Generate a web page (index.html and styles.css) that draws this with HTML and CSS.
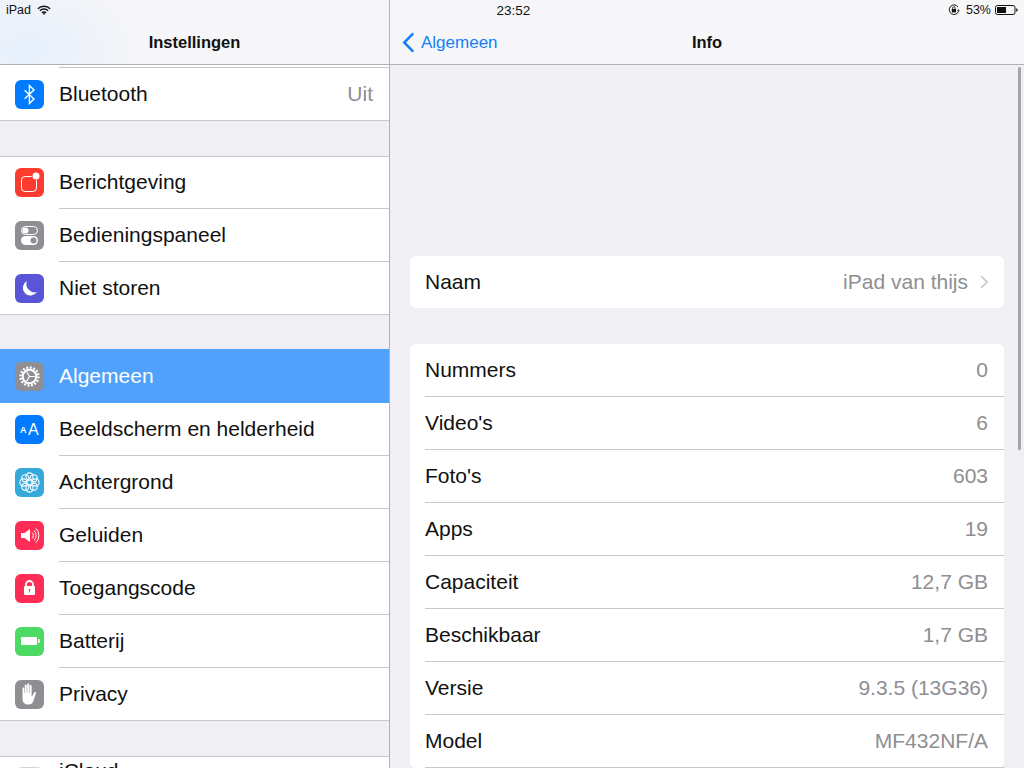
FILE: index.html
```html
<!DOCTYPE html>
<html lang="nl">
<head>
<meta charset="utf-8">
<title>Instellingen</title>
<link rel="stylesheet" href="styles.css">
</head>
<body>
<div class="screen">
  <div class="status">
    <div class="status-left">
      <span>iPad</span>
      <svg class="wifi" viewBox="0 0 14 10"><path d="M.9 3.700a8.700 8.700 0 0 1 12.200 0M2.900 5.800a5.800 5.800 0 0 1 8.200 0M4.900 7.800a2.900 2.900 0 0 1 4.200 0" fill="none" stroke="#111" stroke-width="1.500"/><path d="M7 10 5.700 8.600a1.900 1.900 0 0 1 2.600 0z" fill="#111"/></svg>
    </div>
    <div class="status-time">23:52</div>
    <div class="status-right">
      <svg class="lock-rot" viewBox="0 0 12 12"><path d="M10.600 7.200A4.800 4.800 0 1 1 10 3" fill="none" stroke="#111" stroke-width="1"/><path d="M10.400 5.200 12 6.800H9z" fill="#111"/><rect x="3.800" y="5" width="4.200" height="3.400" fill="#111"/><path d="M4.600 5V4a1.300 1.300 0 0 1 2.600 0v1" fill="none" stroke="#111" stroke-width=".8"/></svg>
      <span class="pct">53%</span>
      <svg class="batt" viewBox="0 0 23 10"><rect x=".5" y=".5" width="19.500" height="9" rx="2" fill="none" stroke="#111"/><rect x="2" y="2" width="9" height="6" fill="#111"/><path d="M21.200 3.200c1 .2 1.500 1 1.500 1.800s-.5 1.600-1.500 1.800z" fill="#111"/></svg>
    </div>
  </div>

  <aside class="sidebar">
    <header class="nav nav-left"><h1 class="nav-title">Instellingen</h1></header>
    <div class="list">
      <div class="group group-first">
        <div class="row">
          <svg class="icon" viewBox="0 0 29 29"><rect width="29" height="29" rx="6" fill="#007aff"/><path d="M9.600 10.200 19 18.900l-4.600 4.600V5.500L19 10.100 9.600 18.800" fill="none" stroke="#fff" stroke-width="1.400"/></svg>
          <span class="label">Bluetooth</span><span class="value">Uit</span>
        </div>
      </div>
      <div class="group">
        <div class="row">
          <svg class="icon" viewBox="0 0 29 29"><rect width="29" height="29" rx="6" fill="#ff3b30"/><rect x="6.500" y="8.500" width="15" height="15" rx="3.500" fill="none" stroke="#fff"/><circle cx="21" cy="8" r="4.500" fill="#ff3b30"/><circle cx="21" cy="8" r="3.500" fill="#fff"/></svg>
          <span class="label">Berichtgeving</span>
        </div>
        <div class="row">
          <svg class="icon" viewBox="0 0 29 29"><rect width="29" height="29" rx="6" fill="#8e8e93"/><rect x="6.500" y="5.500" width="16" height="8" rx="4" fill="none" stroke="#fff"/><circle cx="10.500" cy="9.500" r="3" fill="#fff"/><rect x="6" y="15" width="17" height="9" rx="4.500" fill="#fff"/><circle cx="18.500" cy="19.500" r="3" fill="#8e8e93"/></svg>
          <span class="label">Bedieningspaneel</span>
        </div>
        <div class="row">
          <svg class="icon" viewBox="0 0 29 29"><rect width="29" height="29" rx="6" fill="#5856d6"/><path d="M12 7A7.700 7.700 0 1 0 22 18 8.300 8.300 0 0 1 12 7z" fill="#fff"/></svg>
          <span class="label">Niet storen</span>
        </div>
      </div>
      <div class="group group-active">
        <div class="row row-active">
          <svg class="icon" viewBox="0 0 29 29"><rect width="29" height="29" rx="6" fill="#8e8e93"/><circle cx="14.500" cy="14.500" r="9" fill="none" stroke="#fff" stroke-width="2.400" stroke-dasharray="1.900 1.634"/><circle cx="14.500" cy="14.500" r="6.800" fill="none" stroke="#fff" stroke-width="2"/><path d="M20 14.500H14.500L11.700 9.700M14.500 14.500 11.700 19.300" fill="none" stroke="#fff" stroke-width="1.200"/></svg>
          <span class="label">Algemeen</span>
        </div>
        <div class="row">
          <svg class="icon" viewBox="0 0 29 29"><rect width="29" height="29" rx="6" fill="#007aff"/><text x="5" y="18" class="aa-small">A</text><text x="13" y="20" class="aa-big">A</text></svg>
          <span class="label">Beeldscherm en helderheid</span>
        </div>
        <div class="row">
          <svg class="icon" viewBox="0 0 29 29"><rect width="29" height="29" rx="6" fill="#34aadc"/><g fill="none" stroke="#fff" stroke-width="1.100"><circle cx="14.500" cy="8.500" r="3.600"/><circle cx="14.500" cy="20.500" r="3.600"/><circle cx="8.500" cy="14.500" r="3.600"/><circle cx="20.500" cy="14.500" r="3.600"/><circle cx="10.300" cy="10.300" r="3.600"/><circle cx="18.700" cy="10.300" r="3.600"/><circle cx="10.300" cy="18.700" r="3.600"/><circle cx="18.700" cy="18.700" r="3.600"/></g></svg>
          <span class="label">Achtergrond</span>
        </div>
        <div class="row">
          <svg class="icon" viewBox="0 0 29 29"><rect width="29" height="29" rx="6" fill="#ff2d55"/><path d="M6 12h3.500L15 8v13l-5.500-4H6z" fill="#fff"/><path d="M17 11.500a4 4 0 0 1 0 6M19 9.500a7 7 0 0 1 0 10M21 7.500a10 10 0 0 1 0 14" fill="none" stroke="#fff" stroke-width="1"/></svg>
          <span class="label">Geluiden</span>
        </div>
        <div class="row">
          <svg class="icon" viewBox="0 0 29 29"><rect width="29" height="29" rx="6" fill="#ff2d55"/><path d="M11 12V10.500a3.500 3.500 0 0 1 7 0V12" fill="none" stroke="#fff" stroke-width="1.800"/><rect x="9" y="12" width="11" height="9" rx="1" fill="#fff"/><path d="M14.500 15.500v3" stroke="#ff2d55" stroke-width=".8"/><circle cx="14.500" cy="15.800" r=".9" fill="#ff2d55"/></svg>
          <span class="label">Toegangscode</span>
        </div>
        <div class="row">
          <svg class="icon" viewBox="0 0 29 29"><rect width="29" height="29" rx="6" fill="#4cd964"/><rect x="6" y="10" width="16" height="8" rx="1" fill="#fff"/><rect x="23" y="12.200" width="1.600" height="3.600" fill="#fff"/></svg>
          <span class="label">Batterij</span>
        </div>
        <div class="row">
          <svg class="icon" viewBox="0 0 29 29"><rect width="29" height="29" rx="6" fill="#8e8e93"/><path d="M7.500 8.500c0-1.300 1.800-1.300 1.800 0V13h.5V5.500c0-1.300 1.900-1.300 1.900 0V13h.5V4.500c0-1.300 2-1.300 2 0V13h.5V6c0-1.300 1.900-1.300 1.900 0v10l.5.200 2-3.500c.8-1.200 2.400-.4 1.800.9L18 22c-1 1.800-2.500 2.500-4.500 2.500-3.700 0-6-2-6-6z" fill="#fff"/></svg>
          <span class="label">Privacy</span>
        </div>
      </div>
      <div class="group">
        <div class="row row-double">
          <svg class="icon" viewBox="0 0 29 29"><rect x=".5" y=".5" width="28" height="28" rx="6" fill="#fff" stroke="#d4d4d6"/><path d="M7 19a3.500 3.500 0 0 1 1-6.800 5.500 5.500 0 0 1 10.500-1.200A4 4 0 0 1 22 19z" fill="#54c7fc"/></svg>
          <span class="label label-top">iCloud</span>
        </div>
      </div>
    </div>
  </aside>

  <main class="detail">
    <header class="nav nav-right">
      <a class="back">
        <svg class="chev-back" viewBox="0 0 13 22"><path d="M11.500 1.500 2 11l9.500 9.500" fill="none" stroke="#157efb" stroke-width="2.600"/></svg>
        <span>Algemeen</span>
      </a>
      <h2 class="nav-title">Info</h2>
    </header>
    <div class="content">
      <section class="card card-name">
        <div class="irow">
          <span class="label">Naam</span>
          <span class="value">iPad van thijs</span>
          <svg class="chev" viewBox="0 0 9 14"><path d="M1 1l6 6-6 6" fill="none" stroke="#c7c7cc" stroke-width="1.700"/></svg>
        </div>
      </section>
      <section class="card">
        <div class="irow"><span class="label">Nummers</span><span class="value">0</span></div>
        <div class="irow"><span class="label">Video's</span><span class="value">6</span></div>
        <div class="irow"><span class="label">Foto's</span><span class="value">603</span></div>
        <div class="irow"><span class="label">Apps</span><span class="value">19</span></div>
        <div class="irow"><span class="label">Capaciteit</span><span class="value">12,7 GB</span></div>
        <div class="irow"><span class="label">Beschikbaar</span><span class="value">1,7 GB</span></div>
        <div class="irow"><span class="label">Versie</span><span class="value">9.3.5 (13G36)</span></div>
        <div class="irow"><span class="label">Model</span><span class="value">MF432NF/A</span></div>
      </section>
    </div>
    <div class="scrollbar"></div>
  </main>
</div>
</body>
</html>
```
FILE: styles.css
```css
* { box-sizing: border-box; }
html, body { margin: 0; padding: 0; }
body {
  width: 1024px;
  height: 768px;
  overflow: hidden;
  background: #efeff4;
  font-family: "Liberation Sans", Arial, sans-serif;
  color: #111;
}
.screen {
  position: relative;
  display: flex;
  width: 1024px;
  height: 768px;
  overflow: hidden;
}

/* status bar */
.status {
  position: absolute;
  top: 0;
  left: 0;
  z-index: 3;
  width: 1024px;
  height: 20px;
  display: grid;
  grid-template-columns: 1fr auto 1fr;
  align-items: center;
  padding: 0 6px;
  font-size: 12.500px;
  color: #111;
}
.status-left { display: flex; align-items: center; gap: 6px; }
.status-time { font-size: 13.500px; padding: 1px 0 0 3px; }
.status-right { display: flex; align-items: center; justify-content: flex-end; }
.wifi { width: 14px; height: 10px; }
.lock-rot { width: 12px; height: 12px; margin-right: 6px; }
.pct { margin-right: 4px; }
.batt { width: 23px; height: 10px; }

/* nav */
.nav {
  height: 65px;
  border-bottom: 1px solid #b2b2b2;
  display: flex;
  align-items: center;
  justify-content: center;
  padding-top: 20px;
  flex: none;
}
.nav-left {
  background: radial-gradient(ellipse 120px 80px at 25px 50px, #e5effc 0%, #eef3fa 50%, #f6f6f8 100%);
}
.nav-right { position: relative; background: #f6f6f8; }
.nav-title { margin: 0; font-size: 16.500px; font-weight: 700; line-height: 24px; color: #111; }
.back {
  position: absolute;
  left: 12px;
  top: 32px;
  display: flex;
  align-items: center;
  gap: 6px;
  color: #157efb;
  font-size: 17px;
  line-height: 20px;
}
.chev-back { width: 13px; height: 21px; }

/* sidebar */
.sidebar {
  width: 390px;
  flex: none;
  display: flex;
  flex-direction: column;
  border-right: 1px solid #b2b2b2;
  background: #efeff4;
}
.list { flex: 1; min-height: 0; overflow: hidden; }
.group {
  background: #fff;
  box-shadow: inset 0 1px 0 #c8c7cc;
  margin-bottom: 35px;
}
.group-first { padding-top: 2px; box-shadow: none; }
.group-first::before {
  content: "";
  display: block;
  height: 1px;
  margin-left: 59px;
  background: #c8c7cc;
}
.group-active { margin-top: -1px; }
.row {
  position: relative;
  display: flex;
  align-items: center;
  height: 53px;
  padding: 0 16px 1px 15px;
  font-size: 21px;
}
.row::after {
  content: "";
  position: absolute;
  left: 59px;
  right: 0;
  bottom: 0;
  height: 1px;
  background: #c8c7cc;
}
.row:last-child::after { left: 0; }
.row-active {
  height: 54px;
  padding-bottom: 0;
  background: #4fa1fb;
  color: #fff;
}
.row-active::after { display: none; }
.icon { width: 29px; height: 29px; flex: none; margin-right: 15px; }
.row-double .icon { margin-top: -1px; }
.aa-small { font: 700 9px "Liberation Sans", sans-serif; fill: #fff; }
.aa-big { font: 400 16px "Liberation Sans", sans-serif; fill: #fff; }
.label { flex: 1; white-space: nowrap; }
.label-top { align-self: flex-start; margin-top: 3px; line-height: 24px; }
.value { color: #8e8e93; white-space: nowrap; }

/* detail */
.detail {
  position: relative;
  flex: 1;
  min-width: 0;
  display: flex;
  flex-direction: column;
}
.content { padding: 191px 20px 0; flex: 1; min-height: 0; overflow: hidden; }
.card {
  background: #fff;
  border-radius: 6px;
}
.card-name { margin-bottom: 36px; }
.irow {
  display: flex;
  align-items: center;
  height: 53px;
  margin-left: 15px;
  padding-right: 16px;
  border-bottom: 1px solid #c8c7cc;
  font-size: 21px;
}
.card-name .irow { height: 52px; padding-right: 15px; border-bottom: 0; }
.chev { width: 9px; height: 14px; margin-left: 12px; flex: none; }
.scrollbar {
  position: absolute;
  left: 628px;
  top: 67px;
  width: 3px;
  height: 383px;
  border-radius: 2px;
  background: #a3a3a8;
}
```
